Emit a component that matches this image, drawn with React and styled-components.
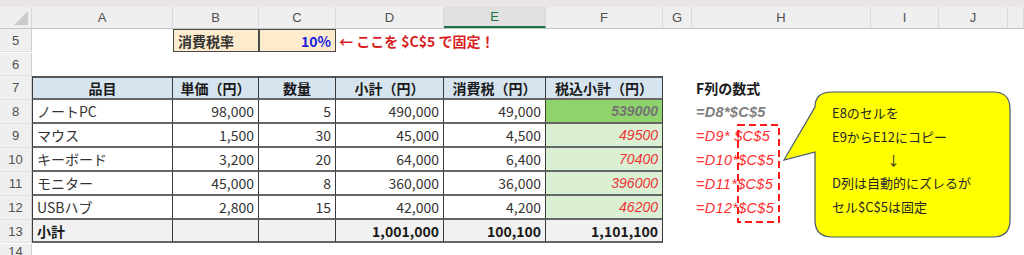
import React from "react";
import styled, { createGlobalStyle, css } from "styled-components";

const Global = createGlobalStyle`
  html, body { margin: 0; padding: 0; background: #fff; }
  body { font-family: "Noto Sans CJK JP", "Liberation Sans", sans-serif; }
`;

const COLS = "32px 141px 86px 77px 108px 102px 117px 29px 179px 68px 69px 1fr";

const Sheet = styled.div`
  position: relative;
  width: 1024px;
  height: 255px;
  overflow: hidden;
  background: #fff;
`;

const TopStrip = styled.div`
  height: 7px;
  background: #ece4e9;
`;

const HeaderRow = styled.div`
  display: grid;
  grid-template-columns: ${COLS};
  height: 22px;
  background: #efefef;
  border-bottom: 1px solid #c6c6c6;
  box-sizing: border-box;
`;

const ColHead = styled.div`
  display: flex;
  align-items: center;
  justify-content: center;
  font-family: "Liberation Sans", sans-serif;
  font-size: 13px;
  color: #505050;
  border-right: 1px solid #dadada;
  box-sizing: border-box;
  ${(p) =>
    p.$active &&
    css`
      background: #e0e0e0;
      border-bottom: 2px solid #217346;
      color: #217346;
    `}
`;

const Corner = styled.div`
  position: relative;
  border-right: 1px solid #dadada;
  svg { position: absolute; right: 3px; bottom: 3px; }
`;

const Row = styled.div`
  display: grid;
  grid-template-columns: ${COLS};
  height: ${(p) => p.$h || 24}px;
`;

const RowHead = styled.div`
  display: flex;
  align-items: center;
  justify-content: center;
  background: #efefef;
  border-right: 1px solid #cfcfcf;
  border-bottom: 1px solid #e2e2e2;
  box-sizing: border-box;
  font-family: "Liberation Sans", sans-serif;
  font-size: 13px;
  color: #505050;
`;

const Cell = styled.div`
  display: flex;
  align-items: center;
  box-sizing: border-box;
  font-size: 14px;
  color: #333;
  white-space: nowrap;
  min-width: 0;
  padding: 0 4px;
  justify-content: ${(p) =>
    p.$align === "right" ? "flex-end" : p.$align === "center" ? "center" : "flex-start"};
  ${(p) => p.$bg && css`background: ${p.$bg};`}
  ${(p) => p.$bold && css`font-weight: 700; color: #1a1a1a;`}
  ${(p) =>
    p.$boxed &&
    css`
      border-right: 1px solid #3a3a3a;
      border-bottom: 2px solid #666;
    `}
  ${(p) => p.$first && css`border-left: 1px solid #3a3a3a;`}
  ${(p) => p.$top && css`border-top: 2px solid #555;`}
  ${(p) => p.$overflow && css`overflow: visible;`}
`;

const TaxCell = styled(Cell)`
  background: #fcebcd;
  border: 1px solid #4a4a4a;
  font-weight: 700;
`;

const Percent = styled.span`
  color: #2020e0;
  font-weight: 700;
`;

const Note = styled.span`
  color: #d81e1e;
  font-weight: 700;
  font-size: 14px;
  margin-left: -1px;
`;

const Fx = styled.span`
  font-style: italic;
  font-size: 14.5px;
  font-family: "Liberation Sans", "Noto Sans CJK JP", sans-serif;
  color: ${(p) => (p.$red ? "#ff3030" : "#7f7f7f")};
  font-weight: ${(p) => (p.$red ? 400 : 700)};
  letter-spacing: 0.3px;
`;

const Result = styled.span`
  font-style: italic;
  font-family: "Liberation Sans", "Noto Sans CJK JP", sans-serif;
  font-size: 14px;
  color: ${(p) => (p.$red ? "#ee3434" : "#737373")};
  font-weight: ${(p) => (p.$red ? 400 : 700)};
`;

const Title = styled.span`
  font-weight: 700;
  color: #1a1a1a;
  font-size: 14px;
`;

const DashBox = styled.svg`
  position: absolute;
  left: 736px;
  top: 123px;
`;

const Callout = styled.svg`
  position: absolute;
  left: 780px;
  top: 88px;
`;

const CalloutText = styled.div`
  position: absolute;
  left: 832px;
  top: 101px;
  font-size: 13px;
  line-height: 24px;
  color: #262626;
`;

const ArrowLine = styled.div`
  padding-left: 55px;
  line-height: 22px;
`;

const colLetters = ["A", "B", "C", "D", "E", "F", "G", "H", "I", "J", ""];

const items = [
  { name: "ノートPC", price: "98,000", qty: "5", sub: "490,000", tax: "49,000", total: "539000", fx: "=D8*$C$5" },
  { name: "マウス", price: "1,500", qty: "30", sub: "45,000", tax: "4,500", total: "49500", fx: "=D9* $C$5" },
  { name: "キーボード", price: "3,200", qty: "20", sub: "64,000", tax: "6,400", total: "70400", fx: "=D10*$C$5" },
  { name: "モニター", price: "45,000", qty: "8", sub: "360,000", tax: "36,000", total: "396000", fx: "=D11*$C$5" },
  { name: "USBハブ", price: "2,800", qty: "15", sub: "42,000", tax: "4,200", total: "46200", fx: "=D12*$C$5" },
];

const heads = ["品目", "単価（円）", "数量", "小計（円）", "消費税（円）", "税込小計（円）"];

const Empty = ({ n }) => Array.from({ length: n }).map((_, i) => <Cell key={i} />);

export default function App() {
  return (
    <>
      <Global />
      <Sheet>
        <TopStrip />
        <HeaderRow>
          <Corner>
            <svg width="14" height="14" viewBox="0 0 14 14">
              <polygon points="14,0 14,14 0,14" fill="#cbcbcb" />
            </svg>
          </Corner>
          {colLetters.map((c, i) => (
            <ColHead key={i} $active={c === "E"}>{c}</ColHead>
          ))}
        </HeaderRow>

        <Row $h={24}>
          <RowHead>5</RowHead>
          <Cell />
          <TaxCell>消費税率</TaxCell>
          <TaxCell $align="right"><Percent>10%</Percent></TaxCell>
          <Cell $overflow><Note>← ここを $C$5 で固定！</Note></Cell>
          <Empty n={8} />
        </Row>

        <Row $h={23}>
          <RowHead>6</RowHead>
          <Empty n={11} />
        </Row>

        <Row $h={24}>
          <RowHead>7</RowHead>
          {heads.map((h, i) => (
            <Cell key={h} $boxed $top $first={i === 0} $bold $align="center" $bg="#d6e4f0">
              {h}
            </Cell>
          ))}
          <Cell />
          <Cell><Title>F列の数式</Title></Cell>
          <Empty n={3} />
        </Row>

        {items.map((it, i) => (
          <Row key={it.name}>
            <RowHead>{8 + i}</RowHead>
            <Cell $boxed $first>{it.name}</Cell>
            <Cell $boxed $align="right">{it.price}</Cell>
            <Cell $boxed $align="right">{it.qty}</Cell>
            <Cell $boxed $align="right">{it.sub}</Cell>
            <Cell $boxed $align="right">{it.tax}</Cell>
            <Cell $boxed $align="right" $bg={i === 0 ? "#8fd36c" : "#dbf0d3"}>
              <Result $red={i > 0}>{it.total}</Result>
            </Cell>
            <Cell />
            <Cell><Fx $red={i > 0}>{it.fx}</Fx></Cell>
            <Empty n={3} />
          </Row>
        ))}

        <Row>
          <RowHead>13</RowHead>
          <Cell $boxed $first $bold $bg="#f1f1f1">小計</Cell>
          <Cell $boxed $bg="#f1f1f1" />
          <Cell $boxed $bg="#f1f1f1" />
          <Cell $boxed $bold $align="right" $bg="#f1f1f1">1,001,000</Cell>
          <Cell $boxed $bold $align="right" $bg="#f1f1f1">100,100</Cell>
          <Cell $boxed $bold $align="right" $bg="#f1f1f1">1,101,100</Cell>
          <Empty n={6} />
        </Row>

        <Row $h={11}>
          <RowHead>14</RowHead>
          <Empty n={11} />
        </Row>

        <DashBox width="46" height="102" viewBox="0 0 46 102">
          <rect x="2" y="2" width="41" height="97" fill="none" stroke="#ff1a1a" strokeWidth="2" strokeDasharray="7 4" />
        </DashBox>

        <Callout width="236" height="154" viewBox="0 0 236 154">
          <path
            d="M52 4 H213 Q230 4 230 21 V132 Q230 149 213 149 H52 Q35 149 35 132 V64 L4 72 L35 19 Q35 4 52 4 Z"
            fill="#ffff00"
            stroke="#44566c"
            strokeWidth="1.2"
          />
        </Callout>
        <CalloutText>
          <div>E8のセルを</div>
          <div>E9からE12にコピー</div>
          <ArrowLine>↓</ArrowLine>
          <div>D列は自動的にズレるが</div>
          <div>セル$C$5は固定</div>
        </CalloutText>
      </Sheet>
    </>
  );
}
